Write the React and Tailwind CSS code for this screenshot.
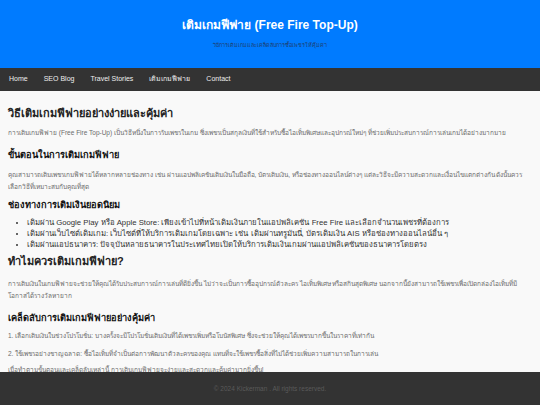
const NAV = ["Home", "SEO Blog", "Travel Stories", "เติมเกมฟีฟาย", "Contact"];

const CHANNELS = [
  "เติมผ่าน Google Play หรือ Apple Store: เพียงเข้าไปที่หน้าเติมเงินภายในแอปพลิเคชัน Free Fire และเลือกจำนวนเพชรที่ต้องการ",
  "เติมผ่านเว็บไซต์เติมเกม: เว็บไซต์ที่ให้บริการเติมเกมโดยเฉพาะ เช่น เติมผ่านทรูมันนี่, บัตรเติมเงิน AIS หรือช่องทางออนไลน์อื่น ๆ",
  "เติมผ่านแอปธนาคาร: ปัจจุบันหลายธนาคารในประเทศไทยเปิดให้บริการเติมเงินเกมผ่านแอปพลิเคชันของธนาคารโดยตรง",
];

export default function App() {
  return (
    <div
      className="min-h-screen bg-[#f9f9f9] text-[#333]"
      style={{ fontFamily: '"Liberation Sans", Arial, "Noto Sans", sans-serif' }}
    >
      {/* Header */}
      <header className="h-[68px] bg-[#007bff] text-center pt-[16px]">
        <h1 className="text-[12px] leading-[18px] font-bold text-white">
          เติมเกมฟีฟาย (Free Fire Top-Up)
        </h1>
        <p className="mt-[6px] text-[5.5px] leading-[10px] text-[#1f3f73]">
          วิธีการเติมเกมและเคล็ดลับการซื้อเพชรให้คุ้มค่า
        </p>
      </header>

      {/* Nav */}
      <nav className="h-[23px] bg-[#333] flex items-center pl-[1px]">
        {NAV.map((n) => (
          <a key={n} href="#" className="px-[8px] text-[7px] text-[#eee]">
            {n}
          </a>
        ))}
      </nav>

      {/* Content */}
      <main className="px-[8px] pb-[40px]">
        <h2 className="mt-[14px] text-[11px] leading-[16px] font-bold text-[#222]">
          วิธีเติมเกมฟีฟายอย่างง่ายและคุ้มค่า
        </h2>
        <p className="mt-[6px] text-[6.5px] leading-[12px] text-[#6b6b6b]">
          การเติมเกมฟีฟาย (Free Fire Top-Up) เป็นวิธีหนึ่งในการรับเพชรในเกม ซึ่งเพชรเป็นสกุลเงินที่ใช้สำหรับซื้อไอเท็มพิเศษและอุปกรณ์ใหม่ๆ ที่ช่วยเพิ่มประสบการณ์การเล่นเกมได้อย่างมากมาย
        </p>

        <h3 className="mt-[9px] text-[9.25px] leading-[14px] font-bold text-[#111]">
          ขั้นตอนในการเติมเกมฟีฟาย
        </h3>
        <p className="mt-[7px] text-[6.5px] leading-[12px] text-[#6b6b6b]">
          คุณสามารถเติมเพชรเกมฟีฟายได้หลากหลายช่องทาง เช่น ผ่านแอปพลิเคชันเติมเงินในมือถือ, บัตรเติมเงิน, หรือช่องทางออนไลน์ต่างๆ แต่ละวิธีจะมีความสะดวกและเงื่อนไขแตกต่างกัน ดังนั้นควรเลือกวิธีที่เหมาะสมกับคุณที่สุด
        </p>

        <h3 className="mt-[5px] text-[9.25px] leading-[14px] font-bold text-[#111]">
          ช่องทางการเติมเงินยอดนิยม
        </h3>
        <ul className="mt-[5px] list-disc pl-[19px] text-[7.75px] leading-[11px] text-[#333]">
          {CHANNELS.map((c) => (
            <li key={c}>{c}</li>
          ))}
        </ul>

        <h2 className="mt-[3px] text-[11px] leading-[16px] font-bold text-[#222]">
          ทำไมควรเติมเกมฟีฟาย?
        </h2>
        <p className="mt-[9px] text-[6.5px] leading-[12px] text-[#6b6b6b]">
          การเติมเงินในเกมฟีฟายจะช่วยให้คุณได้รับประสบการณ์การเล่นที่ดียิ่งขึ้น ไม่ว่าจะเป็นการซื้ออุปกรณ์ตัวละคร ไอเท็มพิเศษ หรือสกินสุดพิเศษ นอกจากนี้ยังสามารถใช้เพชรเพื่อเปิดกล่องไอเท็มที่มีโอกาสได้รางวัลหายาก
        </p>

        <h3 className="mt-[9px] text-[9.25px] leading-[14px] font-bold text-[#111]">
          เคล็ดลับการเติมเกมฟีฟายอย่างคุ้มค่า
        </h3>
        <p className="mt-[5px] text-[6.5px] leading-[12px] text-[#6b6b6b]">
          1. เลือกเติมเงินในช่วงโปรโมชั่น: บางครั้งจะมีโปรโมชั่นเติมเงินที่ได้เพชรเพิ่มหรือโบนัสพิเศษ ซึ่งจะช่วยให้คุณได้เพชรมากขึ้นในราคาที่เท่ากัน
        </p>
        <p className="mt-[6px] text-[6.5px] leading-[12px] text-[#6b6b6b]">
          2. ใช้เพชรอย่างชาญฉลาด: ซื้อไอเท็มที่จำเป็นต่อการพัฒนาตัวละครของคุณ แทนที่จะใช้เพชรซื้อสิ่งที่ไม่ได้ช่วยเพิ่มความสามารถในการเล่น
        </p>
        <p className="mt-[4px] text-[6.5px] leading-[12px] text-[#6b6b6b]">
          เมื่อทำตามขั้นตอนและเคล็ดลับเหล่านี้ การเติมเกมฟีฟายจะง่ายและสะดวกและคุ้มค่ามากยิ่งขึ้น!
        </p>
      </main>

      {/* Footer */}
      <footer className="fixed bottom-0 left-0 w-full h-[33px] bg-[#333] flex items-center justify-center">
        <p className="text-[6.5px] text-[#5a5a5a]">© 2024 Kickerman . All rights reserved.</p>
      </footer>
    </div>
  );
}
